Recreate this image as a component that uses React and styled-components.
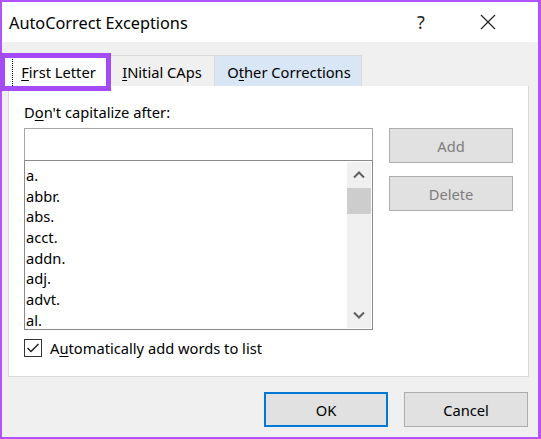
import React, { useState } from "react";
import styled, { createGlobalStyle } from "styled-components";

const Global = createGlobalStyle`
  html, body { margin: 0; padding: 0; background: #fff; }
  * { box-sizing: border-box; }
`;

const words = ["a.", "abbr.", "abs.", "acct.", "addn.", "adj.", "advt.", "al."];

const Window = styled.div`
  position: relative;
  width: 541px;
  height: 439px;
  border: 2px solid #b353ff;
  border-right-width: 3px;
  display: flex;
  flex-direction: column;
  background: #f0f0f0;
  font-family: "Noto Sans", "Open Sans", sans-serif;
  font-size: 14.7px;
  color: #000;
`;

const TitleBar = styled.div`
  height: 40px;
  background: #fff;
  display: flex;
  align-items: center;
  padding-left: 7px;
  font-size: 16.3px;
`;

const Title = styled.div`
  flex: 1;
  margin-top: 2px;
`;

const TitleButton = styled.div`
  width: ${(p) => p.w}px;
  height: 40px;
  display: flex;
  align-items: center;
  justify-content: center;
  font-size: 18px;
  color: #222;
`;

const TabStrip = styled.div`
  display: flex;
  margin: 13px 0 0 1px;
  height: 31px;
`;

const Tab = styled.div`
  width: ${(p) => p.w}px;
  height: 31px;
  display: flex;
  align-items: center;
  justify-content: center;
  border: 1px solid #d9d9d9;
  border-bottom: none;
  border-left-width: ${(p) => (p.first ? 1 : 0)}px;
  background: ${(p) => (p.active ? "#fff" : p.hover ? "#d8e6f6" : "#f0f0f0")};
  position: relative;
  padding: 1px 0 0 ${(p) => (p.first ? 6 : 2)}px;
`;

const FocusLine = styled.div`
  position: absolute;
  left: 8px;
  top: 3px;
  bottom: 0;
  border-left: 1px dotted #000;
`;

const U = styled.span`
  text-decoration: underline;
  text-underline-offset: 2px;
`;

const Panel = styled.div`
  margin: 0 9px 0 6px;
  height: 291px;
  background: #fff;
  border: 1px solid #d9d9d9;
  border-top: none;
  padding: 14px 15px 0 15px;
`;

const Label = styled.div`
  height: 28px;
  line-height: 24px;
`;

const Columns = styled.div`
  display: grid;
  grid-template-columns: 349px 124px;
  column-gap: 16px;
`;

const Field = styled.div`
  height: 32px;
  border: 1px solid #a6a6a6;
  border-bottom: none;
  background: #fff;
`;

const List = styled.div`
  height: 170px;
  border: 1px solid #8a8a8a;
  display: flex;
  overflow: hidden;
`;

const Items = styled.div`
  flex: 1;
  padding: 4px 0 0 1px;
`;

const Item = styled.div`
  height: 20.7px;
  line-height: 20px;
`;

const ScrollBar = styled.div`
  width: 24px;
  margin: 1px 1px 1px 0;
  background: #f0f0f0;
  display: flex;
  flex-direction: column;
  align-items: center;
`;

const Arrow = styled.div`
  height: 26px;
  width: 100%;
  display: flex;
  align-items: center;
  justify-content: center;
`;

const Thumb = styled.div`
  width: 100%;
  height: 26px;
  background: #cdcdcd;
`;

const Track = styled.div`
  flex: 1;
`;

const Side = styled.div`
  display: flex;
  flex-direction: column;
  gap: 13px;
`;

const Button = styled.div`
  width: 124px;
  height: 35px;
  display: flex;
  align-items: center;
  justify-content: center;
  background: #e1e1e1;
  border: ${(p) => (p.primary ? "2px solid #0078d7" : "1px solid #adadad")};
  color: ${(p) => (p.disabled ? "#7d7d7d" : "#000")};
`;

const CheckRow = styled.div`
  display: flex;
  align-items: center;
  gap: 8px;
  margin-top: 8px;
`;

const Box = styled.div`
  width: 18px;
  height: 18px;
  border: 1px solid #333;
  background: #fff;
  display: flex;
  align-items: center;
  justify-content: center;
`;

const Footer = styled.div`
  display: flex;
  justify-content: flex-end;
  gap: 16px;
  padding: 15px 10px 0 0;
`;

const Highlight = styled.div`
  position: absolute;
  left: -2px;
  top: 51px;
  width: 111px;
  height: 38px;
  border: 5px solid #a44af7;
  pointer-events: none;
`;

const Chevron = ({ down }) => (
  <svg width="12" height="8" viewBox="0 0 12 8">
    <path
      d={down ? "M1 1.5 L6 6.5 L11 1.5" : "M1 6.5 L6 1.5 L11 6.5"}
      fill="none"
      stroke="#606060"
      strokeWidth="2"
    />
  </svg>
);

export default function App() {
  const [checked] = useState(true);
  return (
    <>
      <Global />
      <Window>
        <TitleBar>
          <Title>AutoCorrect Exceptions</Title>
          <TitleButton w={34}>?</TitleButton>
          <TitleButton w={100}>
            <svg width="16" height="16" viewBox="0 0 16 16">
              <path d="M1 1 L15 15 M15 1 L1 15" stroke="#222" strokeWidth="1.2" />
            </svg>
          </TitleButton>
        </TitleBar>
        <TabStrip>
          <Tab w={105} first active>
            <FocusLine />
            <span>
              <U>F</U>irst Letter
            </span>
          </Tab>
          <Tab w={107}>
            <span>
              <U>I</U>Nitial CAps
            </span>
          </Tab>
          <Tab w={147} hover>
            <span>
              O<U>t</U>her Corrections
            </span>
          </Tab>
        </TabStrip>
        <Panel>
          <Label>
            D<U>o</U>n't capitalize after:
          </Label>
          <Columns>
            <div>
              <Field />
              <List>
                <Items>
                  {words.map((w) => (
                    <Item key={w}>{w}</Item>
                  ))}
                </Items>
                <ScrollBar>
                  <Arrow>
                    <Chevron />
                  </Arrow>
                  <Thumb />
                  <Track />
                  <Arrow>
                    <Chevron down />
                  </Arrow>
                </ScrollBar>
              </List>
            </div>
            <Side>
              <Button disabled>Add</Button>
              <Button disabled>Delete</Button>
            </Side>
          </Columns>
          <CheckRow>
            <Box>
              {checked && (
                <svg width="14" height="12" viewBox="0 0 14 12">
                  <path d="M1.5 6 L5 9.5 L12.5 2" fill="none" stroke="#222" strokeWidth="1.5" />
                </svg>
              )}
            </Box>
            <span>
              A<U>u</U>tomatically add words to list
            </span>
          </CheckRow>
        </Panel>
        <Footer>
          <Button primary>OK</Button>
          <Button>Cancel</Button>
        </Footer>
        <Highlight />
      </Window>
    </>
  );
}
